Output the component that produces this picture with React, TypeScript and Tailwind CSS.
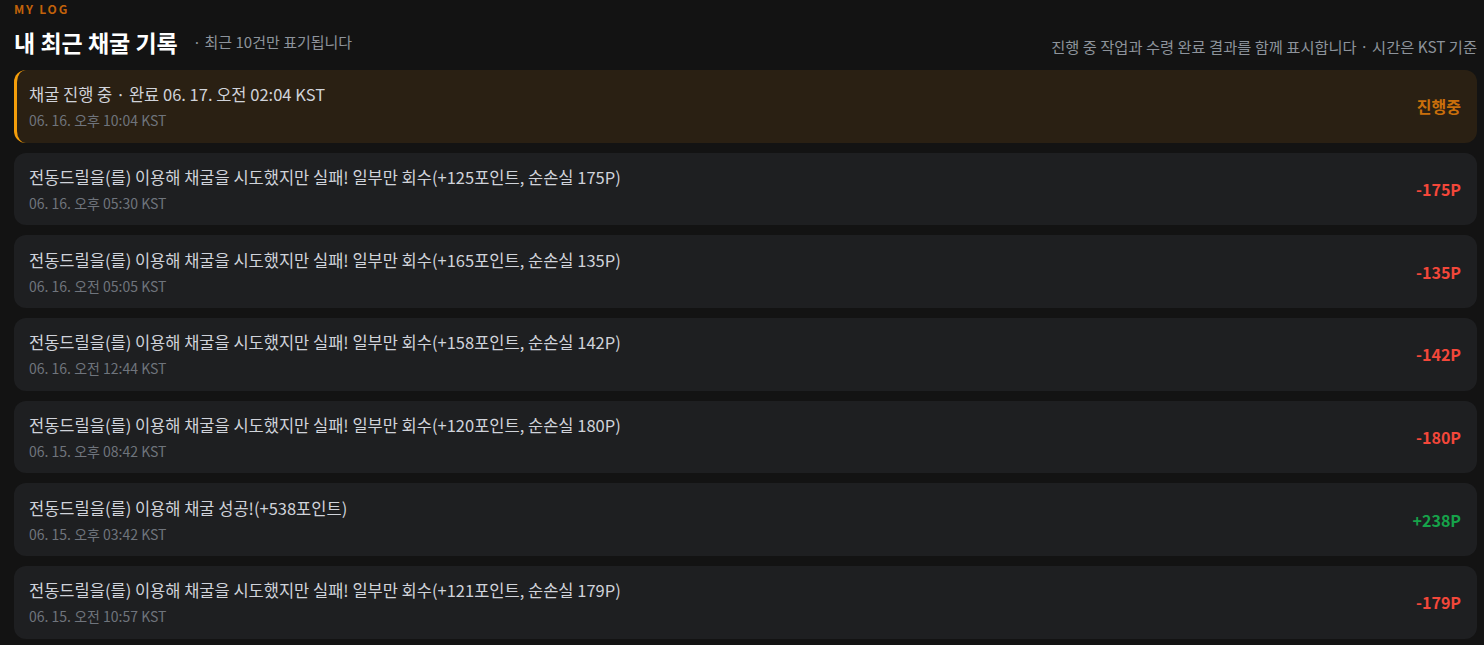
import React from 'react';

interface LogItem {
  title: string;
  time: string;
  value: string;
  kind: 'pending' | 'loss' | 'gain';
}

const logs: LogItem[] = [
  { title: '채굴 진행 중 · 완료 06. 17. 오전 02:04 KST', time: '06. 16. 오후 10:04 KST', value: '진행중', kind: 'pending' },
  { title: '전동드릴을(를) 이용해 채굴을 시도했지만 실패! 일부만 회수(+125포인트, 순손실 175P)', time: '06. 16. 오후 05:30 KST', value: '-175P', kind: 'loss' },
  { title: '전동드릴을(를) 이용해 채굴을 시도했지만 실패! 일부만 회수(+165포인트, 순손실 135P)', time: '06. 16. 오전 05:05 KST', value: '-135P', kind: 'loss' },
  { title: '전동드릴을(를) 이용해 채굴을 시도했지만 실패! 일부만 회수(+158포인트, 순손실 142P)', time: '06. 16. 오전 12:44 KST', value: '-142P', kind: 'loss' },
  { title: '전동드릴을(를) 이용해 채굴을 시도했지만 실패! 일부만 회수(+120포인트, 순손실 180P)', time: '06. 15. 오후 08:42 KST', value: '-180P', kind: 'loss' },
  { title: '전동드릴을(를) 이용해 채굴 성공!(+538포인트)', time: '06. 15. 오후 03:42 KST', value: '+238P', kind: 'gain' },
  { title: '전동드릴을(를) 이용해 채굴을 시도했지만 실패! 일부만 회수(+121포인트, 순손실 179P)', time: '06. 15. 오전 10:57 KST', value: '-179P', kind: 'loss' },
];

const LogRow = ({ item }: { item: LogItem }) => {
  const pending = item.kind === 'pending';
  return (
    <div
      className={
        pending
          ? 'flex h-[72.7px] shrink-0 items-center justify-between rounded-xl border-l-[3px] border-[#f59e0b] bg-[#2a2013] pl-[12px] pr-4'
          : 'flex h-[72.7px] shrink-0 items-center justify-between rounded-xl bg-[#1e1f21] pl-[15px] pr-4'
      }
    >
      <div className="flex flex-col gap-[4px]">
        <div className="text-[16.5px] leading-6 text-[#d0d3da]">{item.title}</div>
        <div className="text-[14px] leading-5 text-[#6f747c]">{item.time}</div>
      </div>
      <div
        className={
          item.kind === 'pending'
            ? 'text-base font-bold text-[#c96f0b]'
            : item.kind === 'gain'
            ? 'text-base font-bold text-[#16a34a]'
            : 'text-base font-bold text-[#f4473a]'
        }
      >
        {item.value}
      </div>
    </div>
  );
};

export default function App() {
  return (
    <div
      className="h-screen overflow-hidden bg-[#131313] pl-[14px] pr-[7px]"
      style={{ fontFamily: '"Noto Sans CJK KR", "Noto Sans", sans-serif' }}
    >
      <div className="pt-[1px] text-xs font-bold leading-4 tracking-[0.15em] text-[#c2620a]">MY LOG</div>
      <div className="mt-[11px] flex items-end justify-between">
        <div className="flex items-center gap-[15px]">
          <h2 className="text-[23px] font-bold leading-7 text-white">내 최근 채굴 기록</h2>
          <span className="text-[15px] text-[#8d939b]">· 최근 10건만 표기됩니다</span>
        </div>
        <div className="text-[15.3px] leading-5 text-[#8d939b]">
          진행 중 작업과 수령 완료 결과를 함께 표시합니다 · 시간은 KST 기준
        </div>
      </div>
      <div className="mt-[14px] flex flex-col gap-[10px]">
        {logs.map((item, i) => (
          <LogRow key={i} item={item} />
        ))}
      </div>
    </div>
  );
}
